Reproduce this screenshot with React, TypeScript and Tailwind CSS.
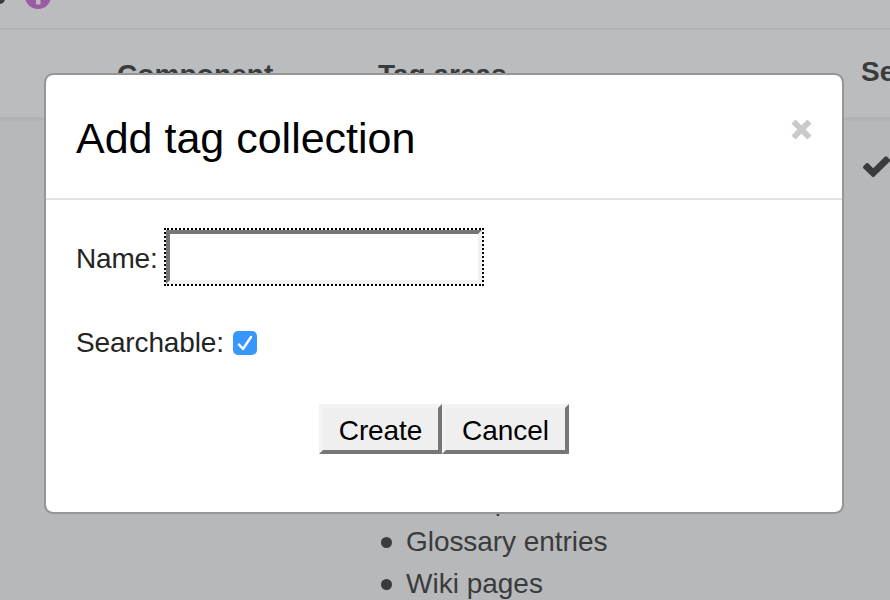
function HelpIcon() {
  return (
    <svg className="block h-[26px] w-[26px]" viewBox="0 0 26 26">
      <circle cx="13" cy="13" r="13" fill="#9c5ba5" />
      <path d="M8.500 9c.5-5 9-5 9 0 0 3-4.500 3-4.500 7" fill="none" stroke="#bbbcbe" strokeWidth="3.500" />
      <path d="M11 16h4.500v5.500h-4.500z" fill="#bbbcbe" />
    </svg>
  );
}

function Page() {
  return (
    <main className="h-[600px] w-[890px] overflow-hidden bg-[#b7b8ba] text-[28px] leading-[42px] text-[#3a3b3d]">
      <div className="flex h-[30px] items-start gap-5 border-b-2 border-[#b2b3b5] bg-[#bbbcbe]">
        <span className="-mt-[8px] -ml-[6px] h-3 w-[11px] rounded-full bg-[#3a3b3d]" />
        <div className="-mt-[17px]"><HelpIcon /></div>
      </div>
      <div className="flex h-[91px] items-start border-b-4 border-[#b2b3b5] bg-[#bbbcbe] pt-[24px] pl-[117px] font-bold whitespace-nowrap">
        <span className="w-[261px] shrink-0 tracking-[0.1px]">Component</span>
        <span className="w-[483px] shrink-0">Tag areas</span>
        <span className="-mt-[3px]">Searchable</span>
      </div>
      <div className="flex pl-[378px]">
        <ul className="h-[479px] w-[484px] shrink-0 pt-[357px]">
          <li className="flex h-[42px] items-center gap-[14px] pl-[3px]">
            <span className="h-[11px] w-[11px] translate-y-px rounded-full bg-[#3a3b3d]" />
            <span className="pt-[3px]">Forum posts</span>
          </li>
          <li className="flex h-[42px] items-center gap-[14px] pl-[3px]">
            <span className="h-[11px] w-[11px] translate-y-px rounded-full bg-[#3a3b3d]" />
            <span className="pt-[2px] tracking-[-0.050px]">Glossary entries</span>
          </li>
          <li className="flex h-[42px] items-center gap-[14px] pl-[3px]">
            <span className="h-[11px] w-[11px] translate-y-px rounded-full bg-[#3a3b3d]" />
            <span className="pt-[2px]">Wiki pages</span>
          </li>
        </ul>
        <svg className="mt-[33px] h-[24px] w-[28px] shrink-0" viewBox="0 0 28 24">
          <path d="M1.300 12.300L4.200 9.300Q5.200 8.500 6.200 9.300L11.200 14.200L22.500 3Q24 1.600 25.400 3L28 5.700V7.300L12.200 22.800Q11.200 23.600 10.200 22.800L1.300 14.200Q.5 13.200 1.300 12.300Z" fill="#3a3b3d" />
        </svg>
      </div>
    </main>
  );
}

function Dialog() {
  return (
    <section className="absolute top-[73px] left-[44px] h-[441px] w-[800px] rounded-[9px] border-2 border-[#959698] bg-white bg-clip-padding text-[28px] leading-[42px] text-[#242424]">
      <header className="flex h-[125px] items-start justify-between border-b-2 border-[#e3e3e3] pr-[30px] pl-[30px]">
        <h1 className="mt-[33px] text-[43px] leading-[60px] text-black">Add tag collection</h1>
        <svg className="mt-[44px] h-[21px] w-[21px]" viewBox="0 0 20 20">
          <path d="M2.400 2.400l15.200 15.200M17.600 2.400L2.400 17.600" stroke="#cacaca" strokeWidth="5.600" />
        </svg>
      </header>
      <div className="px-[30px] pt-[30px]">
        <label className="flex h-[54px] items-center">
          <span className="w-[90px] shrink-0 pt-[3px] tracking-[-0.200px]">Name:</span>
          <input className="h-[54px] w-[316px] border-4 border-t-[#767676] border-r-[#f1f1f1] border-b-[#f1f1f1] border-l-[#767676] bg-white outline-2 outline-black outline-dotted" />
        </label>
        <label className="mt-[38px] flex h-[42px] items-center">
          <span className="w-[157px] shrink-0 tracking-[-0.150px]">Searchable:</span>
          <svg className="h-[24px] w-[24px]" viewBox="0 0 24 24">
            <rect width="24" height="24" rx="5" fill="#3897fc" />
            <path d="M6 13.500l4 4.500L18 6" fill="none" stroke="white" strokeWidth="2.400" strokeLinecap="round" strokeLinejoin="round" />
          </svg>
        </label>
        <div className="mt-[40px] flex pl-[243px] text-black">
          <button className="h-[50px] w-[123px] border-4 border-t-[#f3f3f3] border-r-[#767676] border-b-[#767676] border-l-[#f3f3f3] bg-[#efefef] pt-[2px] tracking-[-0.100px]">Create</button>
          <button className="h-[50px] w-[127px] border-4 border-t-[#f3f3f3] border-r-[#767676] border-b-[#767676] border-l-[#f3f3f3] bg-[#efefef] pt-[2px]">Cancel</button>
        </div>
      </div>
    </section>
  );
}

export default function App() {
  return (
    <div className="relative h-[600px] w-[890px] overflow-hidden font-['Liberation_Sans',sans-serif]">
      <Page />
      <Dialog />
    </div>
  );
}
